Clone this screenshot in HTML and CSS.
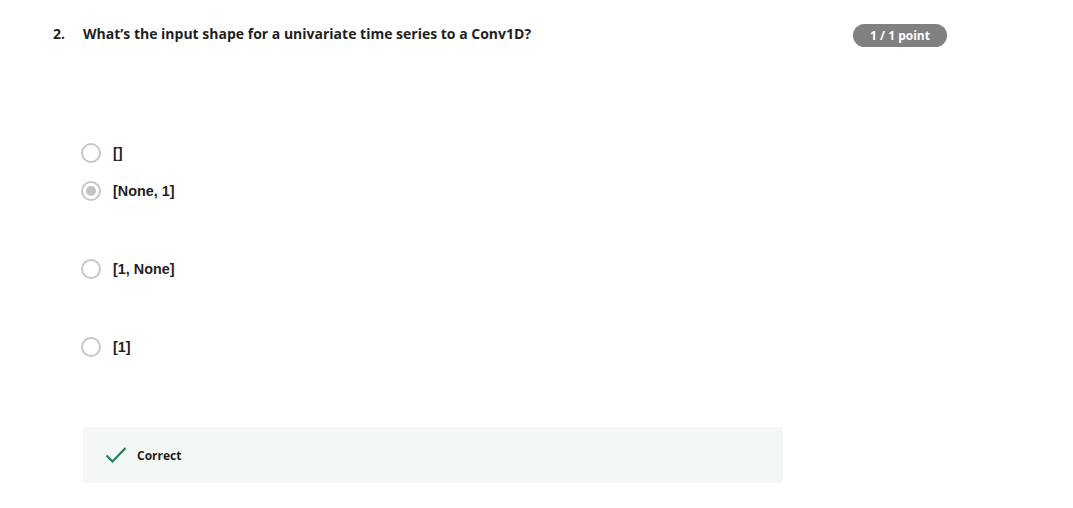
FILE: index.html
```html
<!DOCTYPE html>
<html>
<head>
<meta charset="utf-8">
<link rel="stylesheet" href="styles.css">
</head>
<body>
<div class="page">
  <div class="question-row">
    <div class="qnum">2.</div>
    <div class="qtext">What’s the input shape for a univariate time series to a Conv1D?</div>
    <div class="badge">1 / 1 point</div>
  </div>
  <div class="options">
    <div class="option opt1"><span class="radio"></span><span class="label">[]</span></div>
    <div class="option opt2"><span class="radio checked"></span><span class="label">[None, 1]</span></div>
    <div class="option opt3"><span class="radio"></span><span class="label">[1, None]</span></div>
    <div class="option opt4"><span class="radio"></span><span class="label">[1]</span></div>
  </div>
  <div class="feedback">
    <svg class="check" width="22" height="18" viewBox="0 0 22 18"><path d="M1.5 9.5 L7.5 15.5 L20.5 2" fill="none" stroke="#1f8354" stroke-width="2.2"/></svg>
    <span class="ftext">Correct</span>
  </div>
</div>
</body>
</html>
```
FILE: styles.css
```css
html, body { margin: 0; padding: 0; background: #fff; }
body { font-family: "Open Sans", sans-serif; color: #1f1f1f; }
.page { padding: 23px 126px 0 53px; }
.question-row { display: flex; align-items: flex-start; }
.qnum { width: 30px; font-weight: 700; font-size: 14px; line-height: 22px; }
.qtext { flex: 1; font-weight: 700; font-size: 14px; line-height: 22px; }
.badge { background: #808080; color: #fff; font-weight: 700; font-size: 12px; height: 23px; line-height: 23px; border-radius: 12px; margin-top: 1px; width: 94px; text-align: center; white-space: nowrap; }
.options { padding-left: 28px; margin-top: 95px; }
.option { display: flex; align-items: center; height: 22px; }
.opt2 { margin-top: 16px; }
.opt3 { margin-top: 56px; }
.opt4 { margin-top: 56px; }
.radio { width: 16px; height: 16px; border: 2px solid #c6c6c6; border-radius: 50%; box-sizing: content-box; display: flex; align-items: center; justify-content: center; flex: none; }
.radio.checked::after { content: ""; width: 10px; height: 10px; border-radius: 50%; background: #c2c2c2; }
.label { margin-left: 12px; font-family: "Liberation Sans", Arial, sans-serif; font-weight: 700; font-size: 14.4px; color: #1f1f1f; }
.feedback { margin-top: 69px; margin-left: 30px; width: 700px; height: 56px; background: #f3f8f6; display: flex; align-items: center; padding-left: 22px; box-sizing: border-box; }
.check { display: block; }
.ftext { margin-left: 10px; font-weight: 700; font-size: 12px; }
```
